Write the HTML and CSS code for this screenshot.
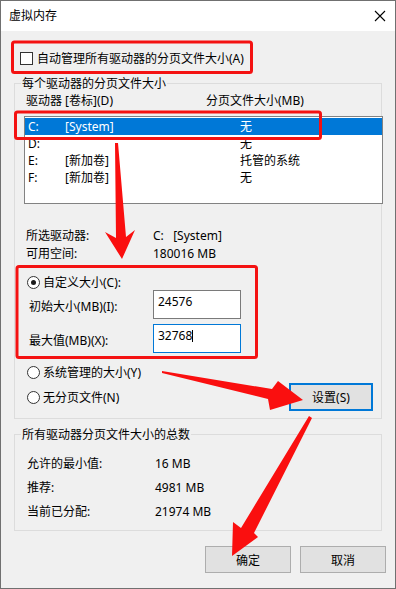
FILE: index.html
```html
<!DOCTYPE html>
<html lang="zh-CN">
<head>
<meta charset="utf-8">
<title>虚拟内存</title>
<link rel="stylesheet" href="styles.css">
</head>
<body>
<div class="window">
  <div class="titlebar">
    <span class="title">虚拟内存</span>
    <svg class="close" width="12" height="12" viewBox="0 0 12 12"><path d="M1 1 L11 11 M11 1 L1 11" stroke="#000" stroke-width="1.1" fill="none"/></svg>
  </div>
  <div class="content">
    <div class="auto-row"><span class="checkbox"></span><span>自动管理所有驱动器的分页文件大小(A)</span></div>

    <div class="group group-drives">
      <div class="legend">每个驱动器的分页文件大小</div>
      <div class="list-head"><span class="col-drive">驱动器 [卷标](D)</span><span>分页文件大小(MB)</span></div>
      <div class="listbox">
        <div class="lrow selected"><span class="c1">C:</span><span class="c2">[System]</span><span>无</span></div>
        <div class="lrow"><span class="c1">D:</span><span class="c2"></span><span>无</span></div>
        <div class="lrow"><span class="c1">E:</span><span class="c2">[新加卷]</span><span>托管的系统</span></div>
        <div class="lrow"><span class="c1">F:</span><span class="c2">[新加卷]</span><span>无</span></div>
      </div>
      <div class="info-row first"><span class="info-label">所选驱动器:</span><span>C:&nbsp;&nbsp;&nbsp;[System]</span></div>
      <div class="info-row"><span class="info-label">可用空间:</span><span>180016 MB</span></div>
      <div class="radio-row custom"><span class="radio checked"></span><span>自定义大小(C):</span></div>
      <div class="field-row"><span class="field-label">初始大小(MB)(I):</span><div class="input">24576</div></div>
      <div class="field-row second"><span class="field-label">最大值(MB)(X):</span><div class="input focused">32768<span class="caret"></span></div></div>
      <div class="radio-row sys"><span class="radio"></span><span>系统管理的大小(Y)</span></div>
      <div class="radio-row none">
        <span class="radio-label"><span class="radio"></span><span>无分页文件(N)</span></span>
        <div class="btn btn-set">设置(S)</div>
      </div>
    </div>

    <div class="group group-total">
      <div class="legend">所有驱动器分页文件大小的总数</div>
      <div class="totals">
        <div class="trow"><span class="t-label">允许的最小值:</span><span>16 MB</span></div>
        <div class="trow"><span class="t-label">推荐:</span><span>4981 MB</span></div>
        <div class="trow"><span class="t-label">当前已分配:</span><span>21974 MB</span></div>
      </div>
    </div>

    <div class="actions">
      <div class="btn btn-dlg">确定</div>
      <div class="btn btn-dlg">取消</div>
    </div>
  </div>

  <svg class="annotations" width="396" height="589" viewBox="0 0 396 589">
    <g fill="none" stroke="#f41212" stroke-width="3">
      <rect x="12.5" y="42" width="239" height="30.5" rx="2"/>
      <rect x="15.5" y="112" width="305" height="26.5" rx="2"/>
      <rect x="17" y="266.5" width="239.5" height="91" rx="2"/>
    </g>
    <g fill="#fa0f0f">
      <polygon points="115,143 118,143 126,237 135,230 122,259 105,232 116,238"/>
      <polygon points="162,371 272,389 278,381 303,400 270,410 268,399 162,373"/>
      <polygon points="309,416 312,418 254,533 258,537 232,556 233,522 241,528"/>
    </g>
  </svg>
</div>
</body>
</html>
```

FILE: styles.css
```css
html, body {
  margin: 0;
  padding: 0;
}
body {
  width: 396px;
  height: 589px;
  font-family: "Noto Sans", "Noto Sans CJK SC", sans-serif;
  font-size: 12px;
  color: #000;
  background: #f0f0f0;
}
.window {
  position: relative;
  box-sizing: border-box;
  width: 396px;
  height: 589px;
  border: 1px solid #707070;
  background: #f0f0f0;
  overflow: hidden;
}
.titlebar {
  height: 30px;
  background: #fff;
  display: flex;
  align-items: center;
  justify-content: space-between;
  padding: 0 9px 0 8px;
}
.title {
  line-height: 30px;
}
.close {
  display: block;
  margin-top: 0;
}
.content {
  display: flex;
  flex-direction: column;
}
.auto-row {
  display: flex;
  align-items: center;
  height: 16px;
  margin-top: 19px;
  padding-left: 19px;
  gap: 4px;
}
.checkbox {
  box-sizing: border-box;
  width: 13px;
  height: 13px;
  border: 1px solid #333;
  background: #fff;
}
.group {
  border: 1px solid #dcdcdc;
  margin: 0 13px;
}
.legend {
  display: inline-block;
  align-self: flex-start;
  height: 16px;
  line-height: 16px;
  margin: -8px 0 0 6px;
  padding: 0 1px;
  background: #f0f0f0;
}
.group-drives {
  margin-top: 17px;
  padding-bottom: 7px;
  display: flex;
  flex-direction: column;
}
.list-head {
  display: flex;
  height: 16px;
  line-height: 16px;
  margin-top: 1px;
  padding-left: 11px;
}
.col-drive {
  width: 180px;
}
.listbox {
  box-sizing: border-box;
  width: 359px;
  height: 88px;
  margin: 7px 0 0 9px;
  padding-top: 1px;
  border: 1px solid #828282;
  background: #fff;
}
.lrow {
  display: flex;
  height: 17px;
  line-height: 17px;
  padding-left: 3px;
}
.lrow.selected {
  background: #0078d7;
  color: #fff;
}
.c1 { width: 37px; }
.c2 { width: 175px; }
.info-row {
  display: flex;
  height: 18px;
  line-height: 18px;
  padding-left: 11px;
}
.info-row.first {
  margin-top: 23px;
}
.info-label {
  width: 127px;
}
.radio-row {
  display: flex;
  align-items: center;
  padding-left: 12px;
}
.radio-row.custom {
  height: 16px;
  margin-top: 11px;
  gap: 3px;
}
.radio-row.sys {
  height: 16px;
  margin-top: 11px;
  gap: 3px;
}
.radio-row.none {
  height: 28px;
  margin-top: 3px;
  justify-content: space-between;
  padding-right: 8px;
}
.radio-label {
  display: flex;
  align-items: center;
  gap: 3px;
}
.radio {
  position: relative;
  box-sizing: border-box;
  width: 13px;
  height: 13px;
  border: 1px solid #333;
  border-radius: 50%;
  background: #fff;
  flex: none;
}
.radio.checked::after {
  content: "";
  position: absolute;
  left: 3px;
  top: 3px;
  width: 5px;
  height: 5px;
  border-radius: 50%;
  background: #1a1a1a;
}
.field-row {
  display: flex;
  align-items: center;
  height: 29px;
  padding-left: 14px;
}
.field-row.second {
  margin-top: 5px;
}
.field-label {
  width: 124px;
  padding-top: 3px;
}
.input {
  box-sizing: border-box;
  width: 88px;
  height: 29px;
  border: 1px solid #7a7a7a;
  background: #fff;
  padding: 3px 4px;
  line-height: 16px;
  display: flex;
  align-items: flex-start;
}
.input.focused {
  border-color: #0078d7;
}
.caret {
  width: 1px;
  height: 12px;
  margin-top: 2px;
  background: #000;
}
.btn {
  box-sizing: border-box;
  display: flex;
  align-items: center;
  justify-content: center;
  background: #e1e1e1;
  border: 1px solid #adadad;
}
.btn-set {
  width: 84px;
  height: 28px;
  border: 2px solid #0078d7;
}
.group-total {
  margin-top: 15px;
  padding-bottom: 6px;
  display: flex;
  flex-direction: column;
}
.totals {
  margin-top: 9px;
  padding-left: 12px;
}
.trow {
  display: flex;
  height: 24px;
  line-height: 24px;
}
.t-label {
  width: 128px;
}
.actions {
  display: flex;
  justify-content: flex-end;
  gap: 9px;
  margin-top: 15px;
  padding-right: 9px;
}
.btn-dlg {
  width: 86px;
  height: 27px;
}
.annotations {
  position: absolute;
  left: -1px;
  top: -1px;
  pointer-events: none;
}
```
